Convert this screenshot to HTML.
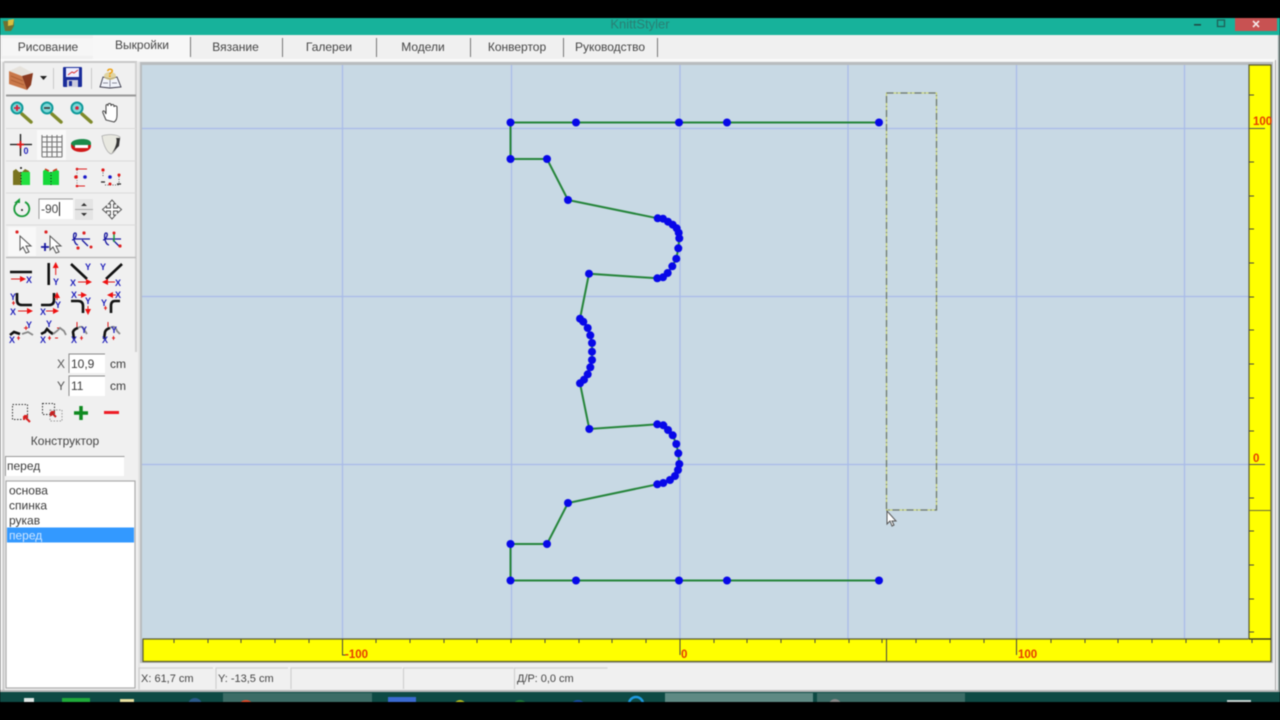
<!DOCTYPE html>
<html lang="ru"><head><meta charset="utf-8"><title>KnittStyler</title>
<style>
html,body{margin:0;padding:0;background:#000;width:1280px;height:720px;overflow:hidden}
svg{display:block;filter:blur(.45px)}
text{font-family:"Liberation Sans",sans-serif}
.m{font-size:12px;fill:#444;text-anchor:middle}
.r{font-size:11.5px;font-weight:bold;fill:#e63c00}
.x{font-size:9px;font-weight:bold;fill:#2222bb;text-anchor:middle}
.l{font-size:12px;fill:#3a3a3a}
.s{font-size:11px;fill:#444}
</style></head><body>
<svg width="1280" height="720" viewBox="0 0 1280 720" xmlns="http://www.w3.org/2000/svg">
<defs>
<marker id="d" markerUnits="userSpaceOnUse" markerWidth="11" markerHeight="11" refX="5.500" refY="5.500"><circle cx="5.500" cy="5.500" r="4" fill="#0808e8"/></marker>
<marker id="a" markerUnits="userSpaceOnUse" markerWidth="6" markerHeight="6" refX="5" refY="3" orient="auto"><path d="M0 0L6 3L0 6z" fill="#e11"/></marker>
</defs>
<rect width="1280" height="720" fill="#000"/>
<!-- title bar -->
<rect y="18" width="1280" height="17" fill="#17b29b"/>
<path d="M3 21h6l5-2v7l-3 5H5z" fill="#6f7030"/><path d="M8 20l6-1-1 6-5 1z" fill="#d8c040"/>
<text x="640" y="28.500" text-anchor="middle" font-size="13" fill="#2a7f74">KnittStyler</text>
<rect x="1194" y="24" width="7" height="1.600" fill="#1f4a45"/>
<rect x="1217.500" y="20" width="7" height="6.500" fill="none" stroke="#1f5f57" stroke-width="1.300"/>
<rect x="1235" y="18" width="42" height="13" fill="#c85252"/>
<path d="M1253 21l6 6M1259 21l-6 6" stroke="#f4e6e6" stroke-width="1.600"/>
<!-- window body -->
<rect y="35" width="1278" height="656" fill="#f0f0f0"/>
<rect x="1275" y="60" width="1" height="630" fill="#a8a8a8"/>
<rect x="1278" y="35" width="2" height="657" fill="#8a9a98"/>
<rect y="690" width="1278" height="2" fill="#b8b8b8"/>
<!-- menu -->
<rect x="2" y="38" width="91" height="18" fill="#f6f6f6"/>
<rect x="93" y="35" width="97" height="24" fill="#f7f7f7"/>
<text class="m" x="48" y="51">Рисование</text>
<text class="m" x="142" y="49">Выкройки</text>
<text class="m" x="235.500" y="51">Вязание</text>
<text class="m" x="329" y="51">Галереи</text>
<text class="m" x="423" y="51">Модели</text>
<text class="m" x="517" y="51">Конвертор</text>
<text class="m" x="610" y="51">Руководство</text>
<path d="M190.500 37v20M282.500 38v19M376.500 38v19M470.500 38v19M563.500 38v19M657.500 38v19" stroke="#777" stroke-width="1"/>
<rect x="0" y="59" width="1275" height="2" fill="#fbfbfb"/>
<!-- canvas -->
<rect x="140" y="62" width="1133" height="601" fill="#b8bcbe"/>
<rect x="142" y="65" width="1107" height="574" fill="#c8d9e4"/>
<path d="M342.500 65v574M511.500 65v574M680 65v574M848 65v574M1016.500 65v574M1184.500 65v574M142 128.500h1107M142 296.500h1107M142 464.500h1107" stroke="#a8bae8" stroke-width="1.200" fill="none"/>
<!-- rulers -->
<rect x="143" y="639" width="1128" height="22" fill="#ff0"/>
<rect x="1249" y="65" width="22" height="574" fill="#ff0"/>
<path d="M142.500 639h1106M143 639v22.500h1128V65h-22v574" fill="none" stroke="#5a5a30" stroke-width="1.200"/>
<path d="M1249 639h22" stroke="#222" stroke-width="1.200"/>
<path d="M174 639v4M208 639v4M241 639v4M275 639v4M309 639v4M376 639v4M410 639v4M444 639v4M477 639v4M511 639v4M545 639v4M579 639v4M612 639v4M646 639v4M714 639v4M747 639v4M781 639v4M815 639v4M849 639v4M882 639v4M916 639v4M950 639v4M984 639v4M1051 639v4M1085 639v4M1118 639v4M1152 639v4M1186 639v4M1219 639v4M1252 639v4" stroke="#444" stroke-width="1"/>
<path d="M342.500 639v16h3M680 639v16M1016.500 639v16" stroke="#444" stroke-width="1" fill="none"/>
<path d="M886.500 639v22" stroke="#444" stroke-width="1"/>
<path d="M1249 95h5M1249 162h5M1249 196h5M1249 229h5M1249 263h5M1249 297h5M1249 330h5M1249 364h5M1249 398h5M1249 431h5M1249 498h5M1249 531h5M1249 565h5M1249 599h5M1249 632h5" stroke="#444" stroke-width="1"/>
<path d="M1249 128.500h16M1249 464.500h16" stroke="#555" stroke-width="1"/>
<path d="M1249 510.500h22" stroke="#6a6a40" stroke-width="1"/>
<text class="r" x="345" y="658">-100</text>
<text class="r" x="681" y="658">0</text>
<text class="r" x="1018" y="658">100</text>
<text class="r" x="1253" y="125">100</text>
<text class="r" x="1253" y="462">0</text>
<!-- pattern -->
<polyline fill="none" stroke="#25853a" stroke-width="2" marker-start="url(#d)" marker-mid="url(#d)" marker-end="url(#d)" points="879,122.500 727,122.500 679,122.500 576,122.500 510.500,122.500 510.500,159 547,159 568,200 657.700,218.300 663,218.700 668,221.700 672.700,224.700 676.700,228.300 678.700,232.700 679.300,238.300 678.300,248.300 676.300,258.700 672.300,266.300 667.700,273 663,277.300 657.300,278.300 589,273.700 580,318.700 583.300,321.700 587.700,328 590.300,335.300 592,343 592,351.700 592,360 590.300,367.300 587.700,374.300 584,379.700 580,383.300 589.300,429 657.300,424.300 663.300,425.300 668,430 672.700,435.300 676.300,444 678.300,453.300 679.300,464 678,470 675,476 670,480 663.300,483 657.300,484.300 568,503 547,544 510.500,544 510.500,580.500 576,580.500 679,580.500 727,580.500 879,580.500"/>
<!-- dashed rect -->
<rect x="886.500" y="93" width="50" height="417" fill="none" stroke="#cdd87a" stroke-width="1.200"/>
<rect x="886.500" y="93" width="50" height="417" fill="none" stroke="#6a7470" stroke-width="1.200" stroke-dasharray="7 3 1 3"/>
<path d="M887 511v13l3-3 2 5 2-1-2-4h4z" fill="#fff" stroke="#555" stroke-width="1"/>
<!-- left toolbar frame -->
<path d="M4 62h133" stroke="#c8c8c8" stroke-width="2"/>
<path d="M3.500 62v628" stroke="#cccccc" stroke-width="2"/>
<rect x="135" y="62" width="2" height="290" fill="#d0d0d0"/>
<rect x="138" y="62" width="2" height="628" fill="#e4e4e4"/>
<path d="M6 95.500h130" stroke="#999" stroke-width="2"/>
<path d="M6 128.500h130M6 161h130M6 193h130M6 225h130" stroke="#dadada" stroke-width="1"/>
<path d="M6 257.500h130" stroke="#bbb" stroke-width="1.500"/>
<path d="M53.500 68v21M91.500 68v21" stroke="#c8c8c8" stroke-width="1"/>
<!-- book -->
<path d="M9 71l13 5 5 14-18-6z" fill="#c9784a"/>
<path d="M9 71l11-5 13 7-11 3z" fill="#e6e2dc"/>
<path d="M22 76l11-3-2 12-4 5z" fill="#8a3a20"/>
<path d="M11 76l12 5M11 80l13 5" stroke="#a85a32" stroke-width=".8"/>
<path d="M40 76h7l-3.500 4z" fill="#222"/>
<!-- floppy -->
<rect x="63" y="67" width="19" height="20" rx="1" fill="#1a2c9a"/>
<rect x="66" y="68" width="13" height="9" fill="#eef"/>
<path d="M68 75l4-3 2 1 4-3" stroke="#d33" fill="none"/>
<rect x="67" y="80" width="11" height="7" fill="#ccd"/>
<rect x="69" y="81" width="3" height="5" fill="#1a2c9a"/>
<!-- help book -->
<path d="M100 87l3-10 7 2 7-2 4 10-11 1z" fill="#f2f5fc" stroke="#334" stroke-width=".9"/>
<path d="M110 79v8M103 83h5M112 83h5" stroke="#667" stroke-width=".7"/>
<ellipse cx="110" cy="76" rx="6" ry="4" fill="#d8c880" opacity=".7"/>
<text x="110" y="77" font-size="12" font-weight="bold" fill="#eea010" text-anchor="middle">?</text>
<!-- magnifiers -->
<g><path d="M22 114l9 8" stroke="#7f8a2a" stroke-width="3.500" stroke-linecap="round"/><circle cx="17" cy="108" r="5.500" fill="#7fd8d8" stroke="#0f9a9a" stroke-width="2"/><path d="M14 108h6M17 105v6" stroke="#d81f3a" stroke-width="1.800"/></g>
<path d="M52 114l9 8" stroke="#7f8a2a" stroke-width="3.500" stroke-linecap="round"/><circle cx="47" cy="108" r="5.500" fill="#7fd8d8" stroke="#0f9a9a" stroke-width="2"/><path d="M44 108h6" stroke="#444" stroke-width="1.800"/>
<path d="M82 114l9 8" stroke="#7f8a2a" stroke-width="3.500" stroke-linecap="round"/><circle cx="77" cy="108" r="5.500" fill="#7fd8d8" stroke="#0f9a9a" stroke-width="2"/><circle cx="77" cy="108" r="1.800" fill="#d81f3a"/>
<path d="M106 120l-3-7c-1-2 1-3 2-1l1 2v-8c0-2 2-2 2 0v-1c0-2 3-2 3 0v1c0-2 3-2 3 0v1c0-2 3-1 3 0v8c0 3-1 6-3 7z" fill="#fff" stroke="#444" stroke-width="1"/>
<!-- row 3 -->
<path d="M10 144.500h22M20.500 134v22" stroke="#111" stroke-width="1.300"/><path d="M17 144.500h7M20.500 141v7" stroke="#e01818" stroke-width="1.800"/>
<text x="26" y="154" font-size="9" font-weight="bold" fill="#2222bb" text-anchor="middle">0</text>
<rect x="37" y="130" width="29" height="30" fill="#f9f9f9"/>
<path d="M42 137h20M42 142h20M42 147h20M42 152h20M42 157h20M42 135v22M47 135v22M52 135v22M57 135v22M62 135v22" stroke="#777" stroke-width="1.100"/>
<path d="M71 146c0 8 20 8 20 0v-3h-3v2c-3 3-11 3-14 0v-2h-3z" fill="#d01818"/><path d="M71 144c0-6 20-7 20-1v2H76v3l-5-4z" fill="#1b8a4a"/><rect x="75" y="145" width="13" height="3" fill="#fff"/>
<path d="M102 136c5-2 14-2 18 1-1 7-5 16-9 17-5-2-8-11-9-18z" fill="#e8e8e0" stroke="#aaa" stroke-width=".8"/><path d="M116 138c2 3-1 12-5 16l8-8 1-8z" fill="#333"/>
<!-- row 4 vests -->
<path d="M13 171l3-2 3 3h3l3-3 4 2v14H13z" fill="#7a7420"/><path d="M21 172h9v13h-9z" fill="#22e040"/><path d="M21 172v13" stroke="#111" stroke-dasharray="1 2"/><circle cx="21" cy="168" r="1" fill="#111"/>
<path d="M43 171l3-2 3 3h3l3-3 4 2v14H43z" fill="#16d83a"/><path d="M45 169l4 2M57 169l-4 2" stroke="#d83020" stroke-width="1.500"/><path d="M51 172v13" stroke="#111" stroke-dasharray="1 2"/>
<path d="M77 170v16" stroke="#888" stroke-dasharray="1 1.500"/><path d="M78 169h9M78 186h7" stroke="#d22" stroke-width="1"/><circle cx="76" cy="177" r="1.800" fill="#e01818"/><circle cx="85" cy="177" r="1.800" fill="#1818c8"/><circle cx="77" cy="169" r="1.300" fill="#e01818"/><circle cx="77" cy="186" r="1.300" fill="#e01818"/>
<path d="M103 170v6M119 174v10M105 185h14" stroke="#555" stroke-dasharray="1 1.500"/><circle cx="103" cy="170" r="1.600" fill="#e01818"/><circle cx="110" cy="177" r="1.800" fill="#1818c8"/><circle cx="119" cy="175" r="1.500" fill="#e01818"/><circle cx="110" cy="184" r="1.500" fill="#e01818"/><path d="M101 182h4M117 184h4" stroke="#222" stroke-width="1.200"/>
<!-- row 5 -->
<path d="M17 203a7.500 7.500 0 1 0 8-1" fill="none" stroke="#189a38" stroke-width="1.800"/><path d="M14 203h6v-5z" fill="#189a38"/><circle cx="22" cy="210" r="1" fill="#222"/>
<rect x="39" y="199" width="34" height="20" fill="#fff"/><path d="M39 219v-20h34" fill="none" stroke="#999" stroke-width="1"/>
<text x="41" y="213" font-size="12" fill="#444">-90</text><path d="M59.500 202v14" stroke="#222"/>
<rect x="75" y="199" width="18" height="21" fill="#e4e4e4"/><path d="M75 209.500h18" stroke="#aaa"/><path d="M81 206l3-3 3 3zM81 213l3 3 3-3z" fill="#333"/>
<path d="M112 200l3.500 4h-2v4h4v-2l4 3.500-4 3.500v-2h-4v4h2l-3.500 4-3.500-4h2v-4h-4v2l-4-3.500 4-3.500v2h4v-4h-2z" fill="#fff" stroke="#555" stroke-width="1"/>
<!-- row 6 -->
<rect x="8" y="227" width="28" height="29" fill="#f8f8f8"/>
<path d="M20 236v14l3-3 3 6 3-1-3-6h5z" fill="#fff" stroke="#555"/><circle cx="17" cy="232" r="1.600" fill="#d22"/>
<path d="M50 236v14l3-3 3 6 3-1-3-6h5z" fill="#fff" stroke="#555"/><circle cx="46" cy="232" r="1.600" fill="#d22"/><path d="M41 247h8M45 243v8" stroke="#1818a0" stroke-width="1.800"/>
<path d="M72 240c3 0 6-7 3-7s-1 12 3 12M74 239h16M82 240l6 6" stroke="#1818a0" stroke-width="1.300" fill="none"/><circle cx="84" cy="233" r="1.600" fill="#d22"/><circle cx="78" cy="248" r="1.600" fill="#d22"/><circle cx="91" cy="247" r="1.500" fill="#d22"/>
<path d="M103 240c3 0 6-7 3-7s-1 12 3 12M105 239h16M113 240l6 6" stroke="#1818a0" stroke-width="1.300" fill="none"/><path d="M114 232v10" stroke="#189a38" stroke-width="1.500"/><circle cx="114" cy="233" r="1.500" fill="#d22"/><circle cx="120" cy="246" r="1.600" fill="#d22"/>
<!-- row 7 -->
<g fill="none" stroke="#111" stroke-width="2.600">
<path d="M10 272h22M48.700 263v22M71 264l16 15M122 264l-16 15"/>
<path d="M17 293v7q0 5 5 5h10M54 293v7q0 5-5 5h-8M71 301h7q5 0 5 5v7M120 301h-5q-4 0-4 5v7"/>
<path d="M10 335l4-3 3 1 3 1M41 334l4-2 2-3 3 3 3 2M74 339l-1-7q1-3 5-4M104 339l1-7q1-3 5-4"/>
</g>
<g fill="none" stroke="#888" stroke-width="1.800">
<path d="M22 334l6-2 5 3M53 334l4-3 3-3 4 3 2 4M78 328c4-3 6 0 7 3l2 3M110 328c4-3 6 0 7 3l3 3"/>
</g>
<g fill="none" stroke="#e01818" stroke-width="1" marker-end="url(#a)">
<path d="M11 279h14"/><path d="M55.700 275v-12"/><path d="M78 282h13"/><path d="M115 282h-12"/>
<path d="M18 311h14"/><path d="M46 311h12"/><path d="M57 300v-7"/>
<path d="M78 295h8"/><path d="M88 306v8"/><path d="M116 295h-8"/>
</g>
<g stroke="#e01818" stroke-width="1"><path d="M12 303h3M13.500 301v4M104 308h3M105.500 306v4M17 338h3M18.500 336v4M24 328h4M26 326v4M48 338h3M49.500 336v4M55 338h3M59 328h-2M80 338h3M81.500 336v4M77 322v5M112 338h3M113.500 336v4M108 322v5"/></g>
<text class="x" x="29" y="283">X</text><text class="x" x="56" y="285">Y</text><text class="x" x="88" y="270">Y</text><text class="x" x="73" y="286">X</text><text class="x" x="103" y="270">Y</text><text class="x" x="118" y="286">X</text>
<text class="x" x="13" y="300">Y</text><text class="x" x="13" y="315">X</text><text class="x" x="58" y="308">Y</text><text class="x" x="43" y="315">X</text><text class="x" x="74" y="298">X</text><text class="x" x="88" y="304">Y</text><text class="x" x="118" y="298">X</text><text class="x" x="104" y="306">Y</text>
<text class="x" x="12" y="343">X</text><text class="x" x="29" y="328">Y</text><text class="x" x="43" y="343">X</text><text class="x" x="49" y="327">Y</text><text class="x" x="74" y="343">X</text><text class="x" x="84" y="333">Y</text><text class="x" x="105" y="343">X</text><text class="x" x="114" y="333">Y</text>
<!-- coordinates -->
<text class="l" x="57" y="368" style="fill:#555">X</text>
<text class="l" x="57" y="390" style="fill:#555">Y</text>
<rect x="69" y="354" width="36" height="19" fill="#fff"/><path d="M69 373v-19h36" fill="none" stroke="#888"/>
<rect x="69" y="376" width="36" height="20" fill="#fff"/><path d="M69 396v-20h36" fill="none" stroke="#888"/>
<text class="l" x="71" y="368">10,9</text><text class="l" x="71" y="390">11</text>
<text class="l" x="110" y="368">cm</text><text class="l" x="110" y="390">cm</text>
<!-- add/remove -->
<rect x="12.500" y="404.500" width="15" height="15" fill="none" stroke="#333" stroke-dasharray="1.500 1.500"/><path d="M24 416l6 6M24 416h4M24 416v4" stroke="#d81f1f" stroke-width="2"/>
<rect x="42.500" y="403.500" width="12" height="11" fill="none" stroke="#333" stroke-dasharray="1.500 1.500"/><rect x="50" y="410" width="12" height="11" fill="none" stroke="#999" stroke-dasharray="1.500 1.500"/><path d="M51 412l5 5M51 412h4M51 412v4" stroke="#c81f1f" stroke-width="2"/>
<path d="M81 406v14M74 413h14" stroke="#0f8a20" stroke-width="3.500"/>
<path d="M104 412.500h15" stroke="#ee1c25" stroke-width="3"/>
<text class="m" x="65" y="445">Конструктор</text>
<!-- name input -->
<rect x="5" y="456" width="119" height="20" fill="#fff"/><path d="M5.500 476v-19.500h119" fill="none" stroke="#999"/>
<text class="l" x="7" y="470">перед</text>
<!-- list -->
<rect x="6" y="481" width="129" height="207" fill="#fff" stroke="#aaa" stroke-width="1.200"/>
<rect x="7" y="527.500" width="127" height="15" fill="#3399ff"/>
<text class="l" x="9" y="494.500">основа</text>
<text class="l" x="9" y="509.500">спинка</text>
<text class="l" x="9" y="524.500">рукав</text>
<text class="l" x="9" y="539.500" style="fill:#cfe6ff">перед</text>
<!-- status -->
<path d="M139 689v-21h74M216 689v-21h72M291 689v-21h111M403.500 689v-21h110M514.500 689v-21h93" fill="none" stroke="#d0d0d0" stroke-width="1.200"/>
<text class="s" x="141" y="682">X: 61,7 cm</text>
<text class="s" x="218" y="682">Y: -13,5 cm</text>
<text class="s" x="517" y="682">Д/Р: 0,0 cm</text>
<!-- taskbar -->
<rect y="692" width="1280" height="10" fill="#0e4a44"/>
<rect x="223" y="693" width="149" height="9" fill="#3c6c66"/>
<rect x="665" y="693" width="148" height="9" fill="#5f8a84"/>
<rect x="817" y="693" width="148" height="9" fill="#3c6c66"/>
<rect x="24" y="698" width="10" height="4" fill="#dfe8e6"/>
<rect x="62" y="698" width="28" height="4" fill="#1faa3a"/>
<rect x="120" y="699" width="14" height="3" fill="#e8e0a0"/>
<circle cx="195" cy="705" r="7" fill="#2a5a8a"/>
<circle cx="246" cy="708" r="8" fill="#e04a2a"/>
<rect x="388" y="697" width="28" height="5" fill="#3a6ad0"/>
<circle cx="460" cy="706" r="6" fill="#b8c020"/>
<circle cx="520" cy="708" r="8" fill="#1f7a3a"/>
<circle cx="578" cy="708" r="8" fill="#1a4fa0"/>
<circle cx="636" cy="704" r="7" fill="none" stroke="#1f9ae0" stroke-width="2.500"/>
<circle cx="835" cy="705" r="6" fill="#888"/>
<rect x="1227" y="700" width="24" height="2" fill="#c8d4d2"/>
<rect y="702" width="1280" height="18" fill="#000"/>
</svg>
</body></html>
